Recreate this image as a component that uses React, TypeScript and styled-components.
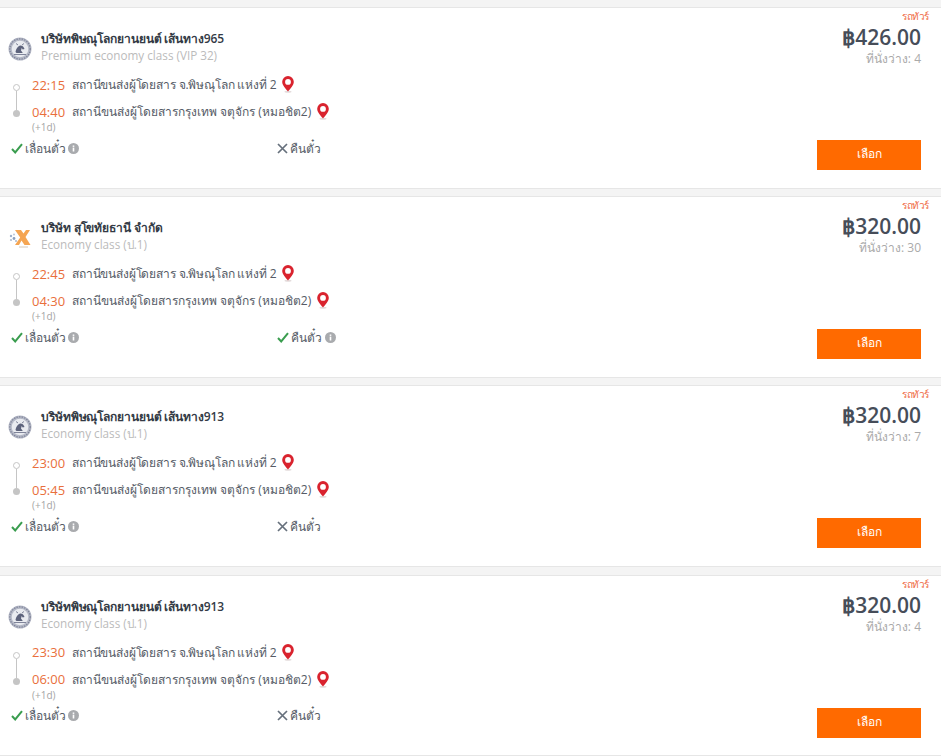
import React from "react";
import styled, { createGlobalStyle } from "styled-components";

const GlobalStyle = createGlobalStyle`
  html, body {
    margin: 0;
    padding: 0;
    background: #f4f4f4;
    font-family: "Open Sans", "Noto Sans", "Liberation Sans", sans-serif;
  }
`;

type TripType = {
  logo: "seal" | "x";
  company: string;
  seatClass: string;
  depart: string;
  arrive: string;
  price: string;
  seats: number;
  refund: boolean;
};

const trips: TripType[] = [
  { logo: "seal", company: "บริษัทพิษณุโลกยานยนต์ เส้นทาง965", seatClass: "Premium economy class (VIP 32)", depart: "22:15", arrive: "04:40", price: "฿426.00", seats: 4, refund: false },
  { logo: "x", company: "บริษัท สุโขทัยธานี จำกัด", seatClass: "Economy class (ป.1)", depart: "22:45", arrive: "04:30", price: "฿320.00", seats: 30, refund: true },
  { logo: "seal", company: "บริษัทพิษณุโลกยานยนต์ เส้นทาง913", seatClass: "Economy class (ป.1)", depart: "23:00", arrive: "05:45", price: "฿320.00", seats: 7, refund: false },
  { logo: "seal", company: "บริษัทพิษณุโลกยานยนต์ เส้นทาง913", seatClass: "Economy class (ป.1)", depart: "23:30", arrive: "06:00", price: "฿320.00", seats: 4, refund: false },
];

const SealLogo = () => (
  <svg width="24" height="24" viewBox="0 0 24 24">
    <circle cx="12" cy="12" r="11.5" fill="#b4b8c6" />
    <circle cx="12" cy="12" r="10.2" fill="none" stroke="#7d8298" strokeWidth="1.2" strokeDasharray="1.4 1.2" />
    <circle cx="12" cy="12" r="8.3" fill="#e9ebf0" />
    <path d="M7.500 15c.5-3 2-5.500 4.500-6.500 2.200-.3 4 1.500 4.500 3.500l-1.800.5-1-1.500-.7 2.500 1.800 2.500H8.500z" fill="#5d637c" />
    <path d="M6 17.500h12M8 6.500l2 1.500M16 6.500l-2 1.500" stroke="#80859a" strokeWidth="1" />
  </svg>
);

const XLogo = () => (
  <svg width="24" height="24" viewBox="0 0 24 24">
    <path d="M7 4h6l2.500 3.500L18 4h4l-4.500 7 5 8h-6l-3-4.500L11 19H7l5.200-7.500z" fill="#f5a552" />
    <circle cx="3" cy="10" r="1.200" fill="#9fb2cd" />
    <circle cx="6" cy="12.500" r="1.400" fill="#8ba0bf" />
    <circle cx="3" cy="14" r="1.100" fill="#afbdd2" />
    <circle cx="6" cy="8.500" r="1" fill="#bcc8d9" />
    <circle cx="8" cy="15" r="1" fill="#a8b8cf" />
    <path d="M11 21h9" stroke="#d5c8b8" strokeWidth="1" />
  </svg>
);

const Pin = () => (
  <svg width="12" height="17" viewBox="0 0 12 17">
    <ellipse cx="6" cy="15.800" rx="3.500" ry="1" fill="#e4dcdc" />
    <path fillRule="evenodd" d="M6 0a5.800 5.800 0 0 1 5.800 5.800C11.800 9.500 8 13 6 15.500 4 13 .2 9.500.2 5.800A5.800 5.800 0 0 1 6 0zm0 3a2.900 2.900 0 1 0 0 5.800A2.900 2.900 0 0 0 6 3z" fill="#d9232e" />
  </svg>
);

const Check = () => (
  <svg width="12" height="11" viewBox="0 0 12 11">
    <path d="M1 6l3.200 3.400L11 1.200" fill="none" stroke="#3a9d4f" strokeWidth="2" />
  </svg>
);

const Cross = () => (
  <svg width="11" height="11" viewBox="0 0 11 11">
    <path d="M1 1l9 9M10 1l-9 9" fill="none" stroke="#66707c" strokeWidth="1.700" />
  </svg>
);

const Info = () => (
  <svg width="11" height="11" viewBox="0 0 11 11">
    <circle cx="5.500" cy="5.500" r="5.500" fill="#a9abae" />
    <rect x="4.700" y="4.600" width="1.600" height="3.900" fill="#fff" />
    <rect x="4.700" y="2.500" width="1.600" height="1.400" fill="#fff" />
  </svg>
);

export default function App() {
  return (
    <Page>
      <GlobalStyle />
      {trips.map((trip, i) => (
        <Card key={i}>
          <BusType>รถทัวร์</BusType>
          <Left>
            <Header>
              <LogoBox>{trip.logo === "seal" ? <SealLogo /> : <XLogo />}</LogoBox>
              <div>
                <Company>{trip.company}</Company>
                <SeatClass>{trip.seatClass}</SeatClass>
              </div>
            </Header>
            <Route>
              <Timeline>
                <DotOpen />
                <Line />
                <DotFull />
              </Timeline>
              <Stops>
                <Stop>
                  <Time>{trip.depart}</Time>
                  <StopName $tight>สถานีขนส่งผู้โดยสาร จ.พิษณุโลก แห่งที่ 2</StopName>
                  <Pin />
                </Stop>
                <Stop>
                  <Time>{trip.arrive}</Time>
                  <StopName>สถานีขนส่งผู้โดยสารกรุงเทพ จตุจักร (หมอชิต2)</StopName>
                  <Pin />
                </Stop>
                <NextDay>(+1d)</NextDay>
              </Stops>
            </Route>
            <Policies>
              <Policy>
                <Check />
                <PolicyText>เลื่อนตั๋ว</PolicyText>
                <Info />
              </Policy>
              <Policy>
                {trip.refund ? <Check /> : <Cross />}
                <PolicyText>คืนตั๋ว</PolicyText>
                {trip.refund && <Info />}
              </Policy>
            </Policies>
          </Left>
          <Right>
            <Price>{trip.price}</Price>
            <Seats>ที่นั่งว่าง: {trip.seats}</Seats>
            <SelectButton>เลือก</SelectButton>
          </Right>
        </Card>
      ))}
    </Page>
  );
}

const Page = styled.div`
  width: 941px;
  height: 756px;
  overflow: hidden;
  padding-top: 7px;
  box-sizing: border-box;
  display: flex;
  flex-direction: column;
  gap: 7.2px;
`;
const Card = styled.div`
  position: relative;
  flex: none;
  height: 182px;
  box-sizing: border-box;
  background: #fff;
  border-top: 1px solid #e6e6e6;
  border-bottom: 1px solid #e6e6e6;
  display: flex;
  justify-content: space-between;
  padding: 0 20px 0 8px;

  &:last-child {
    height: 181.4px;
  }
`;
const BusType = styled.div`
  position: absolute;
  top: 1px;
  right: 12px;
  font-size: 10px;
  line-height: 14px;
  font-weight: 500;
  letter-spacing: -0.4px;
  color: #ef6a45;
`;
const Left = styled.div`
  width: 640px;
  padding-top: 22px;
`;
const Header = styled.div`
  display: flex;
  align-items: center;
  gap: 9px;
`;
const LogoBox = styled.div`
  width: 24px;
  height: 24px;
  flex: none;
  margin-top: 4px;
`;
const Company = styled.div`
  font-size: 12px;
  line-height: 17px;
  font-weight: 600;
  letter-spacing: -0.1px;
  color: #333a45;
`;
const SeatClass = styled.div`
  font-size: 11.7px;
  line-height: 17px;
  color: #bbbbbb;
`;
const Route = styled.div`
  display: flex;
  margin-top: 7px;
`;
const Timeline = styled.div`
  width: 16px;
  margin-right: 8px;
  padding-top: 13px;
  display: flex;
  flex-direction: column;
  align-items: center;
`;
const DotOpen = styled.div`
  width: 7px;
  height: 7px;
  box-sizing: border-box;
  border: 1px solid #c5c5c5;
  border-radius: 50%;
  background: #fff;
`;
const Line = styled.div`
  width: 1px;
  height: 19px;
  background: #c5c5c5;
`;
const DotFull = styled.div`
  width: 7px;
  height: 7px;
  border-radius: 50%;
  background: #c5c5c5;
`;
const Stops = styled.div`
  display: flex;
  flex-direction: column;
`;
const Stop = styled.div`
  display: flex;
  align-items: center;
  height: 27px;
`;
const Time = styled.span`
  font-size: 13px;
  width: 40px;
  color: #e96f3c;
`;
const StopName = styled.span<{ $tight?: boolean }>`
  font-size: 12px;
  letter-spacing: ${(p) => (p.$tight ? "-0.16px" : "0")};
  color: #555b66;
  margin-right: 6px;
`;
const NextDay = styled.div`
  font-size: 10px;
  line-height: 10px;
  margin-top: -3px;
  color: #a5a5a5;
`;
const Policies = styled.div`
  display: flex;
  margin-top: 6px;
  padding-left: 3px;
`;
const Policy = styled.div`
  flex: none;
  width: 266px;
  display: flex;
  align-items: center;
  gap: 2px;
  height: 20px;
`;
const PolicyText = styled.span`
  font-size: 12px;
  letter-spacing: -0.1px;
  color: #555b66;
  margin-right: 1px;
`;
const Right = styled.div`
  width: 104px;
  padding-top: 16px;
  display: flex;
  flex-direction: column;
  align-items: flex-end;
`;
const Price = styled.div`
  font-size: 21px;
  line-height: 26px;
  font-weight: 600;
  white-space: nowrap;
  color: #464d59;
`;
const Seats = styled.div`
  font-size: 12px;
  line-height: 14px;
  margin-top: 2px;
  white-space: nowrap;
  color: #aaaaaa;
`;
const SelectButton = styled.button`
  margin-top: 74px;
  width: 104px;
  height: 30px;
  flex: none;
  border: 0;
  padding: 0 0 3px;
  background: #ff6a00;
  color: #fff;
  font-family: inherit;
  font-size: 12px;
`;
